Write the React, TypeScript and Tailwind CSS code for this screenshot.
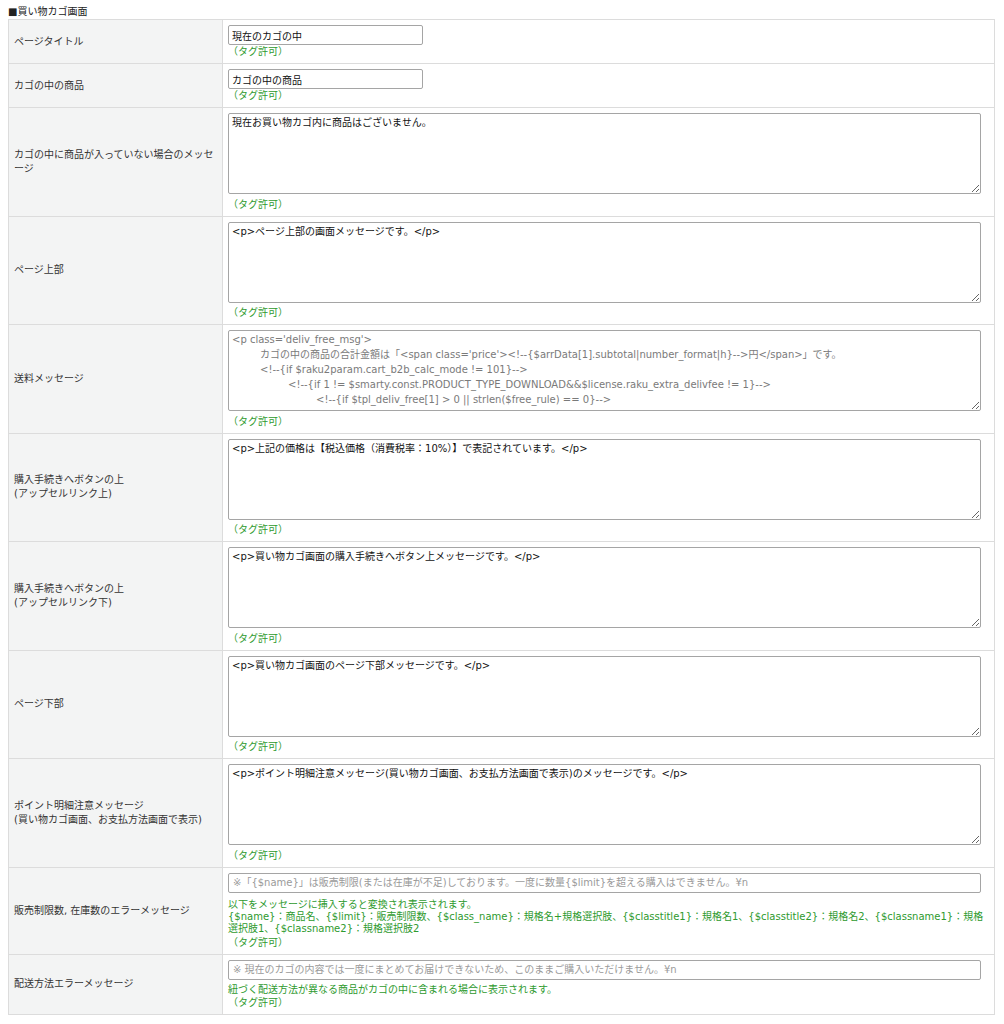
import React from "react";

const GREEN = "text-[#2e9a2e]";

type Row = {
  label: React.ReactNode;
  kind: "short" | "area" | "code" | "long";
  value?: string;
  placeholder?: string;
  notes?: React.ReactNode;
  notesTop?: string;
};

const codeText =
  "<p class='deliv_free_msg'>\n\tカゴの中の商品の合計金額は「<span class='price'><!--{$arrData[1].subtotal|number_format|h}-->円</span>」です。\n\t<!--{if $raku2param.cart_b2b_calc_mode != 101}-->\n\t\t<!--{if 1 != $smarty.const.PRODUCT_TYPE_DOWNLOAD&&$license.raku_extra_delivfee != 1}-->\n\t\t\t<!--{if $tpl_deliv_free[1] > 0 || strlen($free_rule) == 0}-->";

const rows: Row[] = [
  { label: "ページタイトル", kind: "short", value: "現在のカゴの中" },
  { label: "カゴの中の商品", kind: "short", value: "カゴの中の商品" },
  {
    label: "カゴの中に商品が入っていない場合のメッセージ",
    kind: "area",
    value: "現在お買い物カゴ内に商品はございません。",
  },
  { label: "ページ上部", kind: "area", value: "<p>ページ上部の画面メッセージです。</p>" },
  { label: "送料メッセージ", kind: "code", value: codeText },
  {
    label: (
      <>
        購入手続きへボタンの上
        <br />
        (アップセルリンク上)
      </>
    ),
    kind: "area",
    value: "<p>上記の価格は【税込価格（消費税率：10%）】で表記されています。</p>",
  },
  {
    label: (
      <>
        購入手続きへボタンの上
        <br />
        (アップセルリンク下)
      </>
    ),
    kind: "area",
    value: "<p>買い物カゴ画面の購入手続きへボタン上メッセージです。</p>",
  },
  { label: "ページ下部", kind: "area", value: "<p>買い物カゴ画面のページ下部メッセージです。</p>" },
  {
    label: (
      <>
        ポイント明細注意メッセージ
        <br />
        (買い物カゴ画面、お支払方法画面で表示)
      </>
    ),
    kind: "area",
    value: "<p>ポイント明細注意メッセージ(買い物カゴ画面、お支払方法画面で表示)のメッセージです。</p>",
  },
  {
    label: "販売制限数, 在庫数のエラーメッセージ",
    kind: "long",
    placeholder:
      "※「{$name}」は販売制限(または在庫が不足)しております。一度に数量{$limit}を超える購入はできません。¥n",
    notesTop: "mt-[6px]",
    notes: (
      <>
        以下をメッセージに挿入すると変換され表示されます。
        <br />
        {"{$name}：商品名、{$limit}：販売制限数、{$class_name}：規格名+規格選択肢、{$classtitle1}：規格名1、{$classtitle2}：規格名2、{$classname1}：規格選択肢1、{$classname2}：規格選択肢2"}
      </>
    ),
  },
  {
    label: "配送方法エラーメッセージ",
    kind: "long",
    placeholder:
      "※ 現在のカゴの内容では一度にまとめてお届けできないため、このままご購入いただけません。¥n",
    notesTop: "mt-[4px]",
    notes: <>紐づく配送方法が異なる商品がカゴの中に含まれる場合に表示されます。</>,
  },
];

function Value({ row }: { row: Row }) {
  if (row.kind === "short") {
    return (
      <input
        type="text"
        defaultValue={row.value}
        className="block h-[20px] w-[195px] rounded-[2px] border border-[#a5a5a5] bg-white px-[3px] text-[#111] outline-none"
      />
    );
  }
  if (row.kind === "long") {
    return (
      <input
        type="text"
        placeholder={row.placeholder}
        className="block h-[20px] w-[753px] rounded-[2px] border border-[#a5a5a5] bg-white px-[4px] text-[#111] outline-none placeholder:text-[#9a9a9a]"
      />
    );
  }
  return (
    <textarea
      defaultValue={row.value}
      className={
        "block h-[81px] w-[753px] rounded-[2px] border border-[#a5a5a5] bg-white px-[3px] pt-[1px] pb-[1px] leading-[15px] outline-none [tab-size:28px] " +
        (row.kind === "code" ? "text-[#7a7a7a]" : "text-[#111]")
      }
    />
  );
}

export default function App() {
  return (
    <div className="min-h-[1024px] bg-white font-['DejaVu_Sans','Noto_Sans_CJK_JP',sans-serif] text-[10px] leading-[14px] text-[#333]">
      <div className="px-[8px] pt-[5px]">
        <div className="leading-[14px] text-[#222]">■買い物カゴ画面</div>
        <table className="w-[987px] border-collapse">
          <tbody>
            {rows.map((row, i) => (
              <tr key={i}>
                <td className="w-[214px] border border-[#dcdcdc] bg-[#f3f4f4] px-[5px] align-middle leading-[14px] text-[#333]">
                  {row.label}
                </td>
                <td
                  className={
                    "border border-[#dcdcdc] bg-white px-[5px] pt-[5px] align-top " +
                    (row.kind === "long" && i === 9 ? "pb-[4px]" : "pb-[5px]")
                  }
                >
                  <Value row={row} />
                  {row.kind === "area" || row.kind === "code" ? (
                    <div className={"mt-[3.5px] leading-[13px] " + GREEN}>（タグ許可）</div>
                  ) : null}
                  {row.kind === "short" ? (
                    <div className={"leading-[13px] " + GREEN}>（タグ許可）</div>
                  ) : null}
                  {row.kind === "long" ? (
                    <div className={"leading-[12px] " + (row.notesTop ?? "") + " " + GREEN}>
                      {row.notes}
                      <div className={i === 9 ? "leading-[15px]" : "leading-[13px]"}>（タグ許可）</div>
                    </div>
                  ) : null}
                </td>
              </tr>
            ))}
          </tbody>
        </table>
      </div>
    </div>
  );
}
